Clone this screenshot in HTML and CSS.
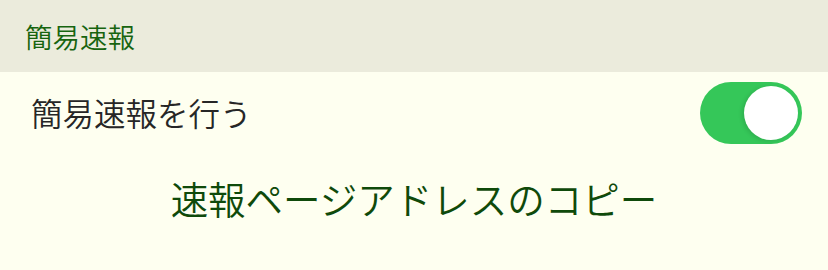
FILE: index.html
```html
<!DOCTYPE html>
<html lang="ja">
<head>
<meta charset="utf-8">
<link rel="stylesheet" href="styles.css">
</head>
<body>
<div class="page">
  <div class="section-header"><span class="section-title">簡易速報</span></div>
  <div class="row">
    <span class="row-label">簡易速報を行う</span>
    <div class="toggle"><div class="knob"></div></div>
  </div>
  <div class="action-row">
    <span class="action">速報ページアドレスのコピー</span>
  </div>
</div>
</body>
</html>
```
FILE: styles.css
```css
html, body {
  margin: 0;
  padding: 0;
  background: #fefff0;
}
.page {
  width: 828px;
  height: 270px;
  font-family: "Noto Sans CJK JP", "Noto Sans", sans-serif;
  font-weight: 350;
  display: flex;
  flex-direction: column;
}
.section-header {
  height: 72px;
  background: #ebebdc;
  display: flex;
  align-items: center;
  padding-left: 25px;
  padding-top: 2px;
  box-sizing: border-box;
}
.section-title {
  font-size: 27.5px;
  color: #17640f;
  line-height: 1;
}
.row {
  height: 82px;
  display: flex;
  align-items: center;
  justify-content: space-between;
  padding: 0 26px 0 31px;
}
.row-label {
  font-size: 31.5px;
  color: #262626;
  line-height: 1;
}
.toggle {
  width: 102px;
  height: 62px;
  border-radius: 31px;
  background: #35c759;
  position: relative;
}
.knob {
  position: absolute;
  right: 4px;
  top: 4px;
  width: 54px;
  height: 54px;
  border-radius: 50%;
  background: #ffffff;
  box-shadow: -2px 1px 4px rgba(0,0,0,0.12);
}
.action-row {
  height: 88px;
  display: flex;
  justify-content: center;
  align-items: center;
}
.action {
  font-size: 37.5px;
  color: #0f4a0a;
  line-height: 1;
}
```
